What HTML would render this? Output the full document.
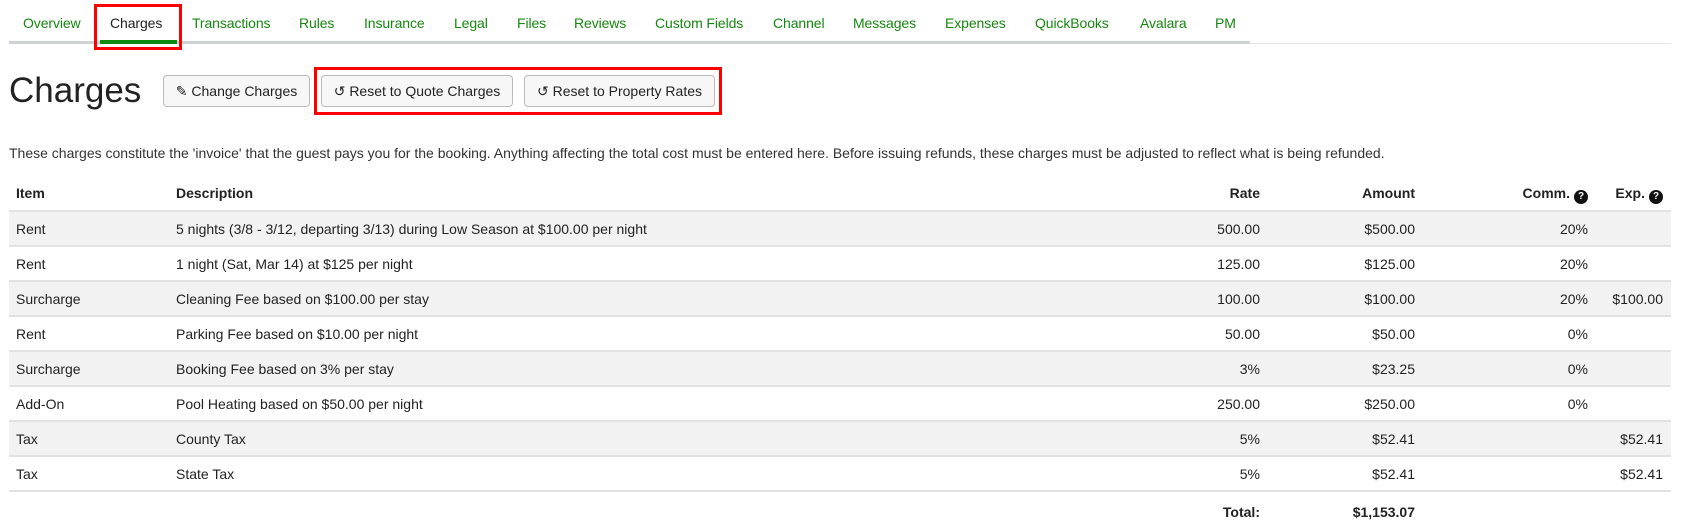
<!DOCTYPE html>
<html><head><style>
*{margin:0;padding:0;box-sizing:border-box}
body{width:1690px;height:507px;overflow:hidden;background:#fff;font-family:"Liberation Sans",Arial,sans-serif;color:#222;font-size:14px;position:relative}
.a{position:absolute;white-space:nowrap}
.nav{color:#16880f;top:15px;font-size:14px;letter-spacing:-0.1px}
.btn{position:absolute;top:75px;height:32px;border:1px solid #bbb;border-radius:4px;background:#f7f7f7;font-size:14px;line-height:30px;text-align:center;color:#222}
.row{position:absolute;left:9px;width:1662px;height:35px;border-top:2px solid #e2e2e2}
.row.s{background:#f2f2f2}
.c{position:absolute;top:9px;white-space:nowrap}
.r{text-align:right}
b.q{display:inline-block;width:14px;height:14px;border-radius:50%;background:#111;color:#fff;font-size:10px;line-height:14px;text-align:center;vertical-align:-1px;margin-left:4px}
</style></head><body>
<span class="a nav" style="left:23px">Overview</span>
<span class="a nav" style="left:110px;color:#222">Charges</span>
<span class="a nav" style="left:192px">Transactions</span>
<span class="a nav" style="left:299px">Rules</span>
<span class="a nav" style="left:364px">Insurance</span>
<span class="a nav" style="left:454px">Legal</span>
<span class="a nav" style="left:517px">Files</span>
<span class="a nav" style="left:574px">Reviews</span>
<span class="a nav" style="left:655px">Custom Fields</span>
<span class="a nav" style="left:773px">Channel</span>
<span class="a nav" style="left:853px">Messages</span>
<span class="a nav" style="left:945px">Expenses</span>
<span class="a nav" style="left:1035px">QuickBooks</span>
<span class="a nav" style="left:1140px">Avalara</span>
<span class="a nav" style="left:1215px">PM</span>
<div class="a" style="left:9px;top:41px;width:1241px;height:3px;background:#ced1d6"></div>
<div class="a" style="left:1250px;top:43px;width:421px;height:1px;background:#e5e5e5"></div>
<div class="a" style="left:100px;top:40px;width:77px;height:4px;background:#0f8a10"></div>
<div class="a" style="left:94px;top:4px;width:88px;height:46px;border:3px solid #f00"></div>

<span class="a" style="left:9px;top:71px;font-size:35px;color:#222">Charges</span>
<div class="btn" style="left:163px;width:147px">✎ Change Charges</div>
<div class="btn" style="left:321px;width:192px">↺ Reset to Quote Charges</div>
<div class="btn" style="left:524px;width:191px">↺ Reset to Property Rates</div>
<div class="a" style="left:314px;top:67px;width:408px;height:48px;border:3px solid #f00"></div>

<span class="a" style="left:9px;top:145px;font-size:14px;color:#333">These charges constitute the 'invoice' that the guest pays you for the booking. Anything affecting the total cost must be entered here. Before issuing refunds, these charges must be adjusted to reflect what is being refunded.</span>

<div class="row" style="top:176px;border-top:none;font-weight:bold">
<span class="c" style="left:7px">Item</span><span class="c" style="left:167px">Description</span>
<span class="c r" style="right:411px">Rate</span><span class="c r" style="right:256px">Amount</span>
<span class="c r" style="right:83px">Comm.<b class="q">?</b></span><span class="c r" style="right:8px">Exp.<b class="q">?</b></span>
</div>

<div class="row s" style="top:210px"><span class="c" style="left:7px">Rent</span><span class="c" style="left:167px">5 nights (3/8 - 3/12, departing 3/13) during Low Season at $100.00 per night</span><span class="c" style="right:411px">500.00</span><span class="c" style="right:256px">$500.00</span><span class="c" style="right:83px">20%</span></div>
<div class="row" style="top:245px"><span class="c" style="left:7px">Rent</span><span class="c" style="left:167px">1 night (Sat, Mar 14) at $125 per night</span><span class="c" style="right:411px">125.00</span><span class="c" style="right:256px">$125.00</span><span class="c" style="right:83px">20%</span></div>
<div class="row s" style="top:280px"><span class="c" style="left:7px">Surcharge</span><span class="c" style="left:167px">Cleaning Fee based on $100.00 per stay</span><span class="c" style="right:411px">100.00</span><span class="c" style="right:256px">$100.00</span><span class="c" style="right:83px">20%</span><span class="c" style="right:8px">$100.00</span></div>
<div class="row" style="top:315px"><span class="c" style="left:7px">Rent</span><span class="c" style="left:167px">Parking Fee based on $10.00 per night</span><span class="c" style="right:411px">50.00</span><span class="c" style="right:256px">$50.00</span><span class="c" style="right:83px">0%</span></div>
<div class="row s" style="top:350px"><span class="c" style="left:7px">Surcharge</span><span class="c" style="left:167px">Booking Fee based on 3% per stay</span><span class="c" style="right:411px">3%</span><span class="c" style="right:256px">$23.25</span><span class="c" style="right:83px">0%</span></div>
<div class="row" style="top:385px"><span class="c" style="left:7px">Add-On</span><span class="c" style="left:167px">Pool Heating based on $50.00 per night</span><span class="c" style="right:411px">250.00</span><span class="c" style="right:256px">$250.00</span><span class="c" style="right:83px">0%</span></div>
<div class="row s" style="top:420px"><span class="c" style="left:7px">Tax</span><span class="c" style="left:167px">County Tax</span><span class="c" style="right:411px">5%</span><span class="c" style="right:256px">$52.41</span><span class="c" style="right:8px">$52.41</span></div>
<div class="row" style="top:455px"><span class="c" style="left:7px">Tax</span><span class="c" style="left:167px">State Tax</span><span class="c" style="right:411px">5%</span><span class="c" style="right:256px">$52.41</span><span class="c" style="right:8px">$52.41</span></div>
<div class="row" style="top:490px;font-weight:bold"><span class="c" style="right:411px;top:12px">Total:</span><span class="c" style="right:256px;top:12px">$1,153.07</span></div>
</body></html>
